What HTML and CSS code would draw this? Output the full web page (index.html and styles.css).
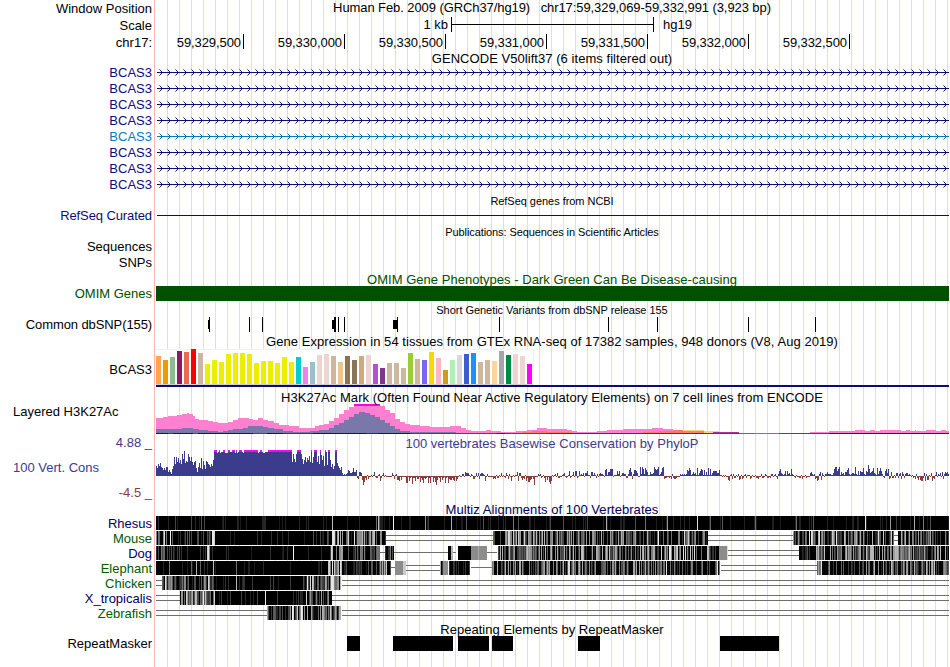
FILE: index.html
```html
<!DOCTYPE html>
<html lang="en">
<head>
<meta charset="utf-8">
<title>Genome Browser - hg19 chr17</title>
<link rel="stylesheet" href="styles.css">
</head>
<body>
<main class="browser">
  <div class="row h17"><div class="label">Window Position</div><div class="title t-position">Human Feb. 2009 (GRCh37/hg19) &nbsp; chr17:59,329,069-59,332,991 (3,923 bp)</div></div>
  <div class="row h16"><div class="label low">Scale</div><div class="scale"><span class="kb">1 kb</span><span class="scalebar"></span><span>hg19</span></div></div>
  <div class="row h17"><div class="label low">chr17:</div><div class="ruler"><span>59,329,500</span><span>59,330,000</span><span>59,330,500</span><span>59,331,000</span><span>59,331,500</span><span>59,332,000</span><span>59,332,500</span></div></div>
  <div class="row h14"><div class="label"></div><div class="title low t-gencode">GENCODE V50lift37 (6 items filtered out)</div></div>
  <div class="row h16 navy"><div class="label low">BCAS3</div><svg class="plot gene"></svg></div>
  <div class="row h16 navy"><div class="label low">BCAS3</div><svg class="plot gene"></svg></div>
  <div class="row h16 navy"><div class="label low">BCAS3</div><svg class="plot gene"></svg></div>
  <div class="row h16 navy"><div class="label low">BCAS3</div><svg class="plot gene"></svg></div>
  <div class="row h16 blue"><div class="label low">BCAS3</div><svg class="plot gene"></svg></div>
  <div class="row h16 navy"><div class="label low">BCAS3</div><svg class="plot gene"></svg></div>
  <div class="row h16 navy"><div class="label low">BCAS3</div><svg class="plot gene"></svg></div>
  <div class="row h16 navy"><div class="label low">BCAS3</div><svg class="plot gene"></svg></div>
  <div class="row h16"><div class="label"></div><div class="title small low t-refseq">RefSeq genes from NCBI</div></div>
  <div class="row h16 navy"><div class="label tight">RefSeq Curated</div><svg class="plot" id="refseq"></svg></div>
  <div class="row h14"><div class="label"></div><div class="title small t-pubs">Publications: Sequences in Scientific Articles</div></div>
  <div class="row h16"><div class="label low">Sequences</div></div>
  <div class="row h16"><div class="label low">SNPs</div></div>
  <div class="row h16 green"><div class="label"></div><div class="title lower t-omim">OMIM Gene Phenotypes - Dark Green Can Be Disease-causing</div></div>
  <div class="row h16 green"><div class="label">OMIM Genes</div><svg class="plot" id="omim"></svg></div>
  <div class="row h14"><div class="label"></div><div class="title small t-snp">Short Genetic Variants from dbSNP release 155</div></div>
  <div class="row h17"><div class="label tight">Common dbSNP(155)</div><svg class="plot" id="snp"></svg></div>
  <div class="row h16"><div class="label"></div><div class="title low t-gtex">Gene Expression in 54 tissues from GTEx RNA-seq of 17382 samples, 948 donors (V8, Aug 2019)</div></div>
  <div class="row h39"><div class="label low">BCAS3</div><svg class="plot" id="gtex"></svg></div>
  <div class="row h16"><div class="label"></div><div class="title lower t-h3k">H3K27Ac Mark (Often Found Near Active Regulatory Elements) on 7 cell lines from ENCODE</div></div>
  <div class="row h30"><div class="label wide">Layered H3K27Ac</div><svg class="plot" id="h3k"></svg></div>
  <div class="row h16 indigo"><div class="label low">4.88 _</div><div class="title lower t-phylop">100 vertebrates Basewise Conservation by PhyloP</div></div>
  <div class="row h35 indigo"><div class="label wide">100 Vert. Cons</div><svg class="plot" id="phylop"></svg></div>
  <div class="row h16 maroon"><div class="label">-4.5 _</div></div>
  <div class="row h15 midnight"><div class="label"></div><div class="title low t-multiz">Multiz Alignments of 100 Vertebrates</div></div>
  <div class="row h15 midnight"><div class="label">Rhesus</div><svg class="plot align"></svg></div>
  <div class="row h15 leaf"><div class="label">Mouse</div><svg class="plot align"></svg></div>
  <div class="row h15 midnight"><div class="label">Dog</div><svg class="plot align"></svg></div>
  <div class="row h15 leaf"><div class="label">Elephant</div><svg class="plot align"></svg></div>
  <div class="row h15 leaf"><div class="label">Chicken</div><svg class="plot align"></svg></div>
  <div class="row h15 midnight"><div class="label">X_tropicalis</div><svg class="plot align"></svg></div>
  <div class="row h15 leaf"><div class="label">Zebrafish</div><svg class="plot align"></svg></div>
  <div class="row h15"><div class="label"></div><div class="title low t-repeat">Repeating Elements by RepeatMasker</div></div>
  <div class="row h16"><div class="label">RepeatMasker</div><svg class="plot" id="repeat"></svg></div>
</main>
<script src="tracks.js"></script>
</body>
</html>
```
FILE: styles.css
```css
body { margin: 0; background: #fff; color: #000; font: 13px/16px "Liberation Sans", Arial, sans-serif; }
.browser {
  width: 949px; height: 667px; overflow: hidden;
  background:
    linear-gradient(#ffb4b4, #ffb4b4) 154px 0 / 1px 100% no-repeat,
    repeating-linear-gradient(90deg, #dcdcfa 0 1px, transparent 1px 12px) 167px 0 / 782px 100% no-repeat;
}
.row { display: grid; grid-template-columns: 155px 794px; white-space: nowrap; }
.h14 { height: 14px; } .h15 { height: 15px; } .h16 { height: 16px; } .h17 { height: 17px; }
.h30 { height: 30px; } .h35 { height: 35px; } .h39 { height: 39px; }
.label { text-align: right; padding-right: 3px; align-self: center; height: 16px; }
.label.wide { text-align: left; padding-left: 13px; }
.label.tight { letter-spacing: -.1px; }
.h30 .label { align-self: start; }
.plot { display: block; width: 794px; height: 100%; shape-rendering: crispEdges; }
.title { text-align: center; align-self: center; height: 16px; }
.title.t-position { align-self: start; }
.low { transform: translateY(1px); }
.lower { transform: translateY(2px); }
.small { font-size: 11px; }
.t-position { letter-spacing: -.085px; }
.t-gencode, .t-h3k, .t-gtex, .t-multiz { letter-spacing: .05px; }
.t-pubs { letter-spacing: -.09px; }
.t-refseq, .t-snp { letter-spacing: -.04px; }
.t-omim, .t-phylop, .t-repeat { letter-spacing: .025px; }
.scale { display: flex; align-items: center; }
.kb { width: 293px; text-align: right; margin-right: 3px; }
.scalebar { width: 201px; height: 15px; border: solid #000; border-width: 0 1px; background: linear-gradient(#000, #000) 0 7px / 100% 1px no-repeat; margin: -1px 9px 0 0; }
.ruler { display: flex; padding-top: 1px; }
.ruler span { width: 98px; padding-right: 2px; border-right: 1px solid #000; text-align: right; height: 15px; line-height: 17px; letter-spacing: -.08px; }
.ruler span:first-child { width: 86px; }
.navy { color: #0c0c78; } .blue { color: #0c78be; } .green { color: #005000; }
.indigo { color: #3c3c8c; } .maroon { color: #8c3c3c; } .midnight { color: #00005f; } .leaf { color: #005a00; }
```
FILE: tracks.js
```js
const NS = 'http://www.w3.org/2000/svg';
const LEFT = 155;

function add(svg, tag, attrs) {
  const el = document.createElementNS(NS, tag);
  for (const k in attrs) el.setAttribute(k, attrs[k]);
  svg.appendChild(el);
}
function rect(svg, x, y, w, h, fill) { add(svg, 'rect', { x: x - LEFT, y, width: w, height: h, fill }); }
function randomizer(seed) {
  return () => { seed = (seed * 1664525 + 1013904223) >>> 0; return seed / 4294967296; };
}
const byId = id => document.getElementById(id);

// Gene models: intron line with strand arrows
document.querySelectorAll('.gene').forEach(svg => {
  rect(svg, 157, 8, 792, 1, 'currentColor');
  for (let x = 159; x < 947; x += 8) {
    [[0, 5, .5], [1, 6, 1], [2, 7, 1], [2, 9, 1], [1, 10, 1], [0, 11, .5]].forEach(([dx, y, o]) =>
      add(svg, 'rect', { x: x + dx - LEFT, y, width: 1, height: 1, fill: 'currentColor', opacity: o }));
  }
});
rect(byId('refseq'), 157, 7, 792, 1, '#0c0c78');
rect(byId('omim'), 156, 0, 793, 15, '#005000');

// Variants
[209, 249, 262, 334, 335, 338, 344, 397, 499, 608, 657, 748, 815].forEach(x => rect(byId('snp'), x, 1, 1, 15, '#000'));
[[208, 1], [332, 3], [393, 4]].forEach(([x, w]) => rect(byId('snp'), x, 4, w, 9, '#000'));

// Tissue expression: height and colour of each bar
const tissues = `28 ffa54f,24 ee9a00,27 8fbc8f,33 8b1c62,32 ee6a50,35 ff0000,31 cdb79e,20 eeee00,24 eeee00,22 eeee00,30 eeee00,31 eeee00,31 eeee00,30 eeee00,21 eeee00,23 eeee00,23 eeee00,21 eeee00,27 eeee00,22 eeee00,27 00cdcd,17 ee82ee,22 9ac0cd,29 eed5d2,30 eed5d2,28 cdb79e,22 eec591,28 8b7355,24 8b7355,28 cdaa7d,29 eed5d2,20 b452cd,16 7a378b,21 cdb79e,21 cdb79e,16 cdb79e,31 9acd32,25 cdb79e,24 7a67ee,32 ffd700,26 ffb6c1,14 cd9b1d,24 b4eeb4,29 d9d9d9,30 3a5fcd,31 1e90ff,22 cdb79e,24 cdb79e,23 ffd39b,33 a6a6a6,29 008b45,30 eed5d2,28 eed5d2,20 ff00ff`;
const gtex = byId('gtex');
rect(gtex, 156, 0, 378, 36, '#f2f2f2');
rect(gtex, 156, 1, 377, 34, '#fff');
rect(gtex, 156, 35, 377, 1, '#d0d0d0');
tissues.split(',').forEach((t, i) => {
  const [h, c] = t.split(' ');
  rect(gtex, 156 + 7 * i, 35 - h, 5, +h, '#' + c);
});
rect(gtex, 156, 36, 793, 2, '#0c0c78');

// Histone mark layers: "x,top" steps down to the baseline
const h3k = byId('h3k');
function layer(points, fill) {
  const p = points.split(' ').map(s => s.split(',').map(Number));
  for (let i = 0; i < p.length - 1; i++) {
    if (p[i][1] < 29) rect(h3k, p[i][0], p[i][1], p[i + 1][0] - p[i][0], 29 - p[i][1], fill);
  }
}
layer('156,14 163,13 168,12 177,11 182,10 187,9 189,10 193,12 195,15 199,16 208,17 213,18 218,19 228,18 233,16 238,14 249,15 253,16 258,14 263,16 268,17 274,19 279,21 289,22 293,22 299,24 315,22 319,21 324,20 329,17 334,14 339,10 344,6 349,3 354,0 380,2 385,6 390,9 395,15 400,18 405,20 410,21 420,22 430,23 450,22 456,22 461,24 466,26 471,27 486,26 491,27 501,28 506,28 516,27 527,26 537,24 547,25 567,26 572,27 577,28 592,28 597,27 607,26 617,26 623,25 652,24 663,25 673,26 693,27 704,28 720,29 810,28 829,27 855,26 865,27 870,26 875,27 880,26 901,27 906,26 910,27 915,26 916,27 926,26 936,27 941,26 946,27 949,0', '#ff80d0');
layer('156,25 172,25 182,24 193,25 199,26 208,27 218,28 223,27 228,26 233,25 243,24 248,22 263,23 268,24 274,25 283,27 293,28 310,27 319,26 329,24 334,21 339,19 344,16 349,13 354,10 359,8 365,9 370,11 375,13 380,16 385,19 390,22 395,25 400,27 410,28 456,29 460,29', '#7a78aa');
layer('522,28 532,27 547,28 572,29 643,28 658,27 673,26 693,27 704,28 713,29 715,29', '#ff786c');
layer('683,26 704,27 719,28 720,29', '#ffd080');
layer('683,27 704,29 705,29', '#ff8070');
layer('704,27 719,27 720,29', '#ffd080');
rect(h3k, 354, 0, 26, 2, '#f0d');
rect(h3k, 156, 29, 300, 1, '#181848');
rect(h3k, 456, 29, 90, 1, '#6830a0');
rect(h3k, 546, 29, 160, 1, '#7c2038');
rect(h3k, 706, 29, 33, 1, '#901878');
rect(h3k, 739, 29, 15, 1, '#d83070');
rect(h3k, 754, 29, 25, 1, '#c840d8');
rect(h3k, 779, 29, 50, 1, '#783070');
rect(h3k, 829, 29, 120, 1, '#401828');
rect(h3k, 713, 28, 26, 1, '#b030a0');
[[168, 5, '#2040c0'], [193, 5, '#804830'], [253, 14, '#803830'], [283, 30, '#204080'], [410, 46, '#2848a0'], [366, 12, '#3020b0'], [496, 9, '#2020c0']].forEach(([x, w, c]) => rect(h3k, x, 29, w, 1, c));

// Conservation scores, one per pixel column; zero line is at row 25
const phylop = byId('phylop');
const UP = '#3c3c8c', DOWN = '#8c3c3c';
const score = [10,8,12,10,13,9,8,6,8,6,9,9,4,6,4,2,7,10,19,12,19,14,18,13,16,12,22,17,25,13,15,14,22,19,15,19,14,11,14,15,8,4,9,13,8,18,7,15,11,7,15,14,12,11,9,12,10,16];
const rnd = randomizer(59329069);
const full = [[214,217],[219,220],[223,225],[228,230],[232,235],[236,237],[239,242],[244,258],[260,262],[268,292],[297,301],[311,312],[314,317],[320,321],[325,326],[328,330],[335,337]];
for (let x = 214; x < 292; x++) score.push(23 + Math.floor(rnd() * 2));
// columns 292 to 357
score.push(14,22,17,14,22, 24,24,24,24,22,17,12,16,19,14,18,16,20,14, 24,13,19,24,24,24,14,20,12,24,21,16,20,10,14,24,11,24,24,16,9,12,7,10,24,24,13,10,8,6,9,3,1,2,1,2,3,6,5,3,3,4,8,4,4,6);
score.push(7);
score.length = 201;
score.push(-2, -3, 4, 4, 3, -4, -9, -6, -2, -4, 1, -3, -1, -1, 1, -1, 1, 4, -1, -2, -2, 1, 2, 1, -2, 1, 3);
// [end, chance of a positive column, highest, deepest]
const zones = [[396,.2,3,3],[452,.03,2,7],[459,.1,1,6],[470,.9,5,1],[481,.5,3,3],[504,.5,3,3],[526,.4,4,5],[552,.1,2,8],[565,.6,3,2],[605,.65,5,2],[640,.8,7,3],[664,1,9,1],[683,.2,2,3],[698,.95,9,1],[719,1,8,1],[740,.25,2,4],[778,.4,2,3],[794,1,7,1],[822,.4,4,4],[830,.8,7,1],[852,1,9,1],[888,.85,8,2],[910,.5,4,3],[935,.2,3,5],[950,.6,4,3]];
let zone = 0;
for (let x = 156 + score.length; x < 949; x++) {
  while (x >= zones[zone][0]) zone++;
  const [, p, hi, lo] = zones[zone];
  const up = rnd() < p, r = rnd();
  score.push(up ? 1 + Math.floor(Math.pow(r, 1.5) * hi) : -1 - Math.floor(Math.pow(r, 1.7) * lo));
}
[[380,-5],[412,-8],[436,-9],[534,-10],[485,-5],[605,6],[630,8],[645,8],[654,9],[658,9],[689,8],[697,8],[710,7],[719,6],[729,-5],[791,7],[817,-5],[839,9],[848,8],[855,9],[868,11],[877,8],[888,7],[925,-5],[932,-5]].forEach(([x, v]) => { score[x - 156] = v; });
score.slice(0, 793).forEach((v, i) => {
  const x = 156 + i;
  const h = full.some(([a, b]) => x >= a && x < b) ? 25 : v;
  if (h > 0) rect(phylop, x, 26 - Math.min(h, 25), 1, Math.min(h, 25), UP);
  else rect(phylop, x, 26, 1, -h, DOWN);
});
full.forEach(([a, b]) => rect(phylop, a, 0, b - a, 2, '#f0f'));

// Alignments: b = block [from, to, share of lighter columns, lightest level],
// g = grey block, d = double gap line, s = single gap line, k = distinct stripes "x:level"
const species = [
  { b: [[156,949,.12,.16]], k: '158:50 175:70 191:70 201:80 204:70 265:40 332:190 376:110 378:190 379:90 393:240 425:150 428:60 451:170 466:90 483:80 513:120 518:80 550:70 563:80 587:70 606:170 635:80 645:110 667:150 697:220 710:100 722:90 755:110 796:110 813:90 865:230 890:150 896:60 914:170 923:120 930:80' },
  { b: [[156,168,.3,.5],[168,214,.45,.4],[214,304,.07,.2],[304,333,.4,.45],[333,356,.5,.9],[356,386,.5,.8],[493,505,.2,.6],[505,545,.85,.95],[545,650,.65,.7],[650,678,.35,.5],[678,708,.65,.8],[793,809,.8,.7],[809,894,.65,.9],[898,923,.7,.95],[923,931,1,.7],[931,949,.5,.5]], g: [[357,362,'#8c8c8c']], d: [[386,493],[708,793],[894,898]], k: '163:140 164:220 170:240 212:230 213:230 214:210 332:230 333:230 334:220 494:80 658:240 684:220' },
  { b: [[156,165,.6,.6],[165,206,.3,.3],[206,292,.07,.2],[292,331,.12,.15],[331,360,.35,.6],[360,380,.6,.6],[385,394,.3,.6],[448,451,0,0],[458,471,.05,.3],[498,655,.65,.75],[655,719,.5,.9],[799,815,.2,.4],[815,949,.65,.75]], g: [[451,453,'#b0b0b0'],[471,478,'#8c8c8c'],[478,479,'#aaa'],[479,487,'#8c8c8c'],[719,727,'#8c8c8c'],[727,728,'#ddd']], s: [[380,385],[394,448],[453,456],[487,497]], d: [[728,799]], k: '207:210 208:230 209:130 293:240 330:60 331:210 332:190 341:160 342:160 669:230 670:230 685:210' },
  { b: [[156,328,.1,.18],[328,352,.55,.85],[352,380,.45,.4],[380,391,.8,.8],[440,444,.5,.7],[449,470,.3,.25],[492,660,.6,.7],[660,720,.45,.55],[817,822,.9,.9],[822,865,.35,.6],[865,949,.65,.8]], g: [[395,403,'#8c8c8c'],[403,406,'#ccc'],[443,448,'#8c8c8c']], s: [[391,395],[471,492]], d: [[406,440],[721,817]], k: '169:120 191:100 196:170 200:100 213:190 236:110 332:230 334:200 340:230 341:180 568:220 569:220 666:220 717:230' },
  { b: [[162,170,.9,.7],[170,182,.5,.6],[182,214,.65,.65],[214,304,.12,.3],[304,320,.7,.85],[320,341,.9,.8]], d: [[156,162],[342,949]], k: '165:220 208:210 209:160 236:180 307:230 310:220 331:230 332:230 333:220' },
  { b: [[180,186,.3,.6],[186,214,.9,.75],[214,290,.15,.3],[290,304,.5,.25],[304,332,.6,.65]], d: [[156,180],[332,949]], k: '186:210 203:230 214:210 265:230 306:210' },
  { b: [[267,290,.45,.4],[290,341,.75,.85]], d: [[156,267],[342,949]], k: '267:170 292:240 293:220 301:240 302:220 313:30 314:10 315:10 316:10 317:10 321:10 327:10' }
];
document.querySelectorAll('.align').forEach((svg, i) => {
  const s = species[i], r = randomizer(17 + i * 101);
  const levels = {};
  s.k.split(' ').forEach(t => { const [x, v] = t.split(':'); levels[x] = +v; });
  (s.d || []).forEach(([a, b]) => {
    if (b - a < 6) rect(svg, a, 0, b - a, 14, '#fff');
    [4, 9].forEach(y => rect(svg, a, y, b - a, 1, '#6e6e6e'));
  });
  (s.s || []).forEach(([a, b]) => rect(svg, a, 6, b - a, 1, '#6e6e6e'));
  s.b.forEach(([a, b, share, top]) => {
    rect(svg, a, 0, b - a, 14, '#000');
    for (let x = a; x < b; x++) {
      const lit = r() < share, q = r();
      const v = levels[x] ?? (lit ? Math.round(25 + q * (top * 255 - 25)) : 0);
      if (v) rect(svg, x, 0, 1, 14, `rgb(${v},${v},${v})`);
    }
  });
  (s.g || []).forEach(([a, b, c]) => rect(svg, a, 0, b - a, 14, c));
  rect(svg, s.b[0][0], 14, s.b[0][1] - s.b[0][0], 1, '#fff');
});

[[347,13],[393,60],[458,31],[492,21],[578,22],[720,59]].forEach(([x, w]) => rect(byId('repeat'), x, 0, w, 15, '#000'));
```
